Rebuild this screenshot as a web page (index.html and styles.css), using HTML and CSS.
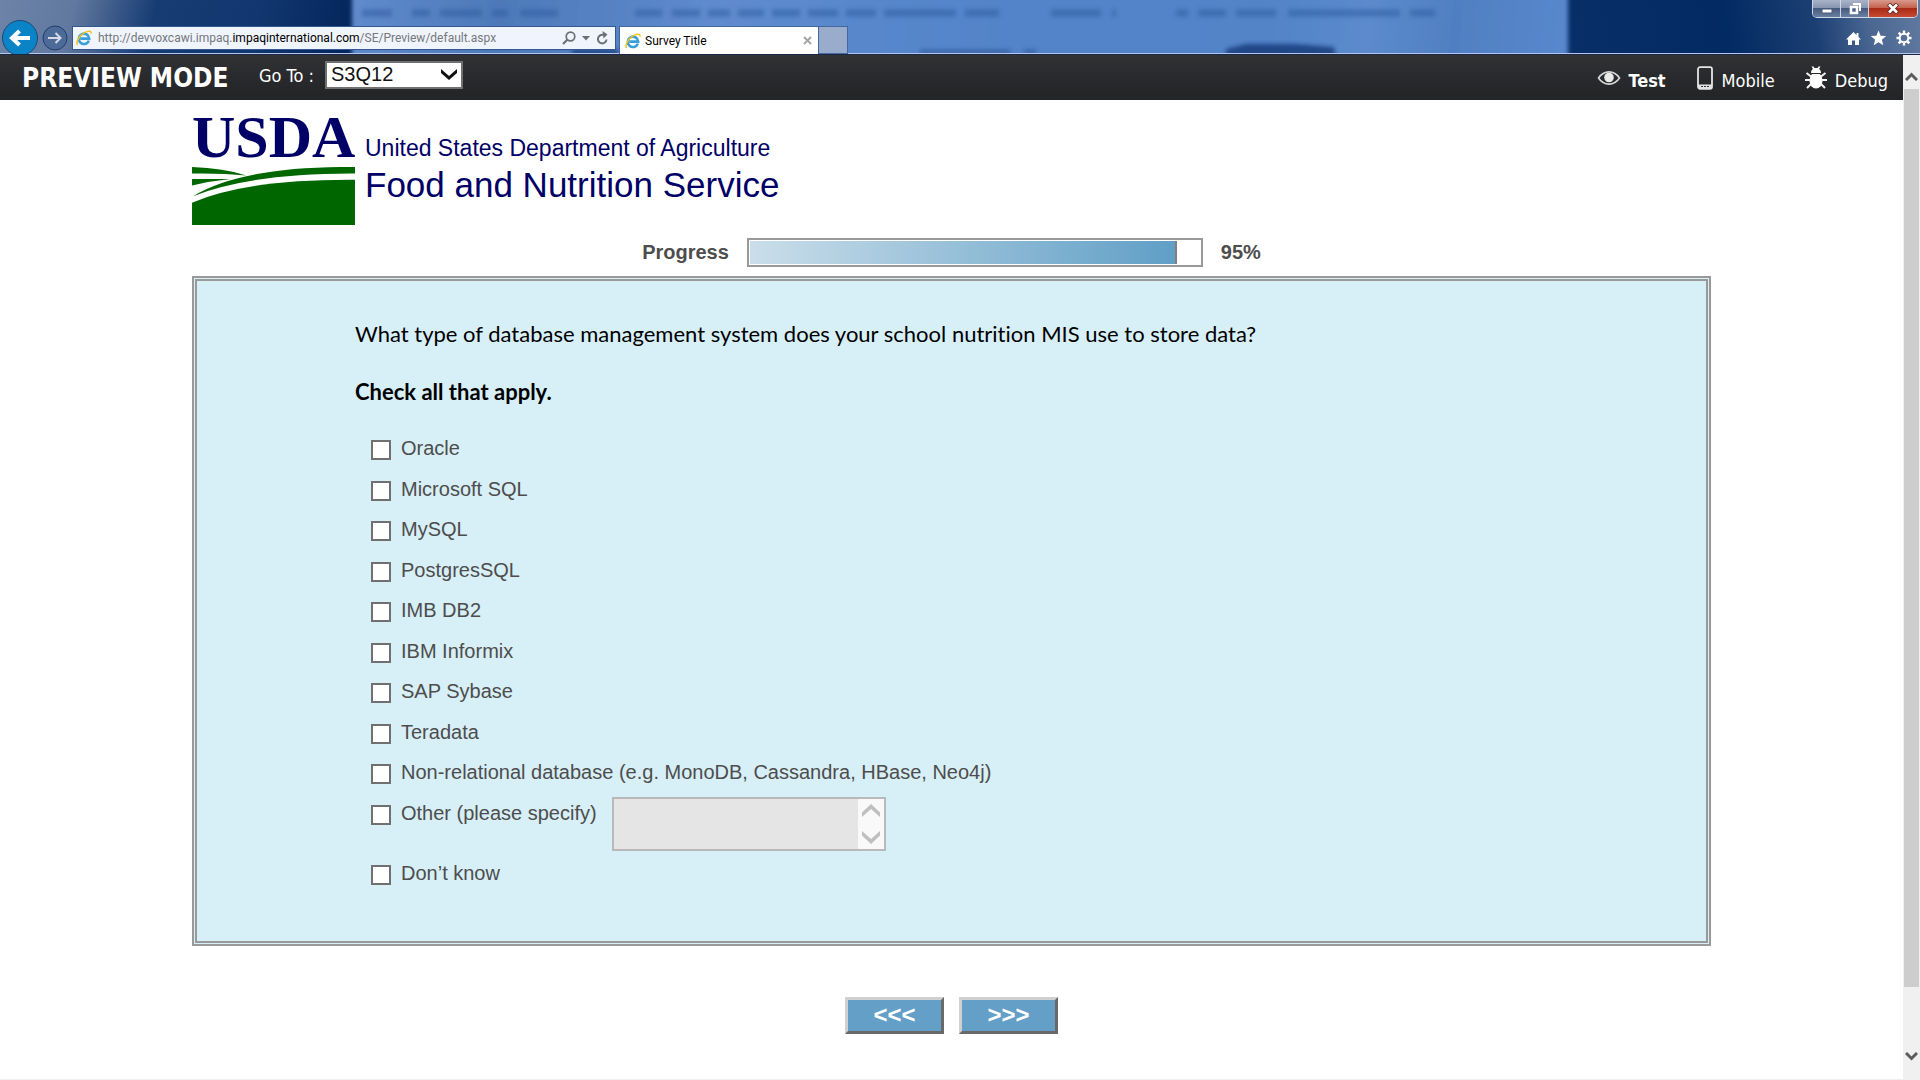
FILE: index.html
```html
<!DOCTYPE html>
<html lang="en">
<head>
<meta charset="utf-8">
<title>Survey Title</title>
<link rel="stylesheet" href="styles.css">
</head>
<body>
<svg class="symbols" aria-hidden="true">
  <symbol id="ie" viewBox="0 0 16 16">
    <path d="M12.9 10.6A5.2 5.2 0 1 1 13.2 8.6H4.4" fill="none" stroke="#3a9fd8" stroke-width="2.6"/>
    <path d="M1.6 15C-.6 12.400 3.500 5.200 8.500 2.600 12 .6 15.400.4 15 3.600" fill="none" stroke="#f2c21c" stroke-width="1.500"/>
  </symbol>
</svg>
<div class="browser">
  <header class="chrome">
    <svg class="glass" viewBox="0 0 1920 53" preserveAspectRatio="xMinYMin slice" aria-hidden="true">
      <defs>
        <linearGradient id="left" gradientUnits="userSpaceOnUse" x1="0" y1="0" x2="352" y2="90">
          <stop offset="0" stop-color="#6d83a8"/><stop offset=".2" stop-color="#62799f"/><stop offset=".42" stop-color="#173c74"/><stop offset=".7" stop-color="#12366f"/><stop offset="1" stop-color="#02235a"/>
        </linearGradient>
        <linearGradient id="mid" gradientUnits="userSpaceOnUse" x1="352" y1="0" x2="1568" y2="120">
          <stop offset="0" stop-color="#5f8bcd"/><stop offset=".12" stop-color="#4d79b9"/><stop offset=".3" stop-color="#5f8bcf"/><stop offset=".55" stop-color="#5283c8"/><stop offset=".75" stop-color="#5384c8"/><stop offset=".83" stop-color="#5c8acd"/><stop offset=".9" stop-color="#507fc2"/><stop offset="1" stop-color="#5a88ce"/>
        </linearGradient>
        <linearGradient id="right" gradientUnits="userSpaceOnUse" x1="1568" y1="60" x2="1920" y2="0">
          <stop offset="0" stop-color="#0a2f68"/><stop offset=".45" stop-color="#022a63"/><stop offset=".7" stop-color="#1c3f73"/><stop offset=".85" stop-color="#4a6792"/><stop offset="1" stop-color="#60799f"/>
        </linearGradient>
        <filter id="soft" filterUnits="userSpaceOnUse" x="300" y="-30" width="1320" height="120"><feGaussianBlur stdDeviation="2"/></filter>
      </defs>
      <rect width="353" height="53" fill="url(#left)"/>
      <rect x="1560" width="360" height="53" fill="url(#right)"/>
      <rect x="352" y="-10" width="1216" height="80" fill="url(#mid)" filter="url(#soft)"/>
      <g filter="url(#soft)" stroke="#2f5ba0" stroke-width="7" opacity=".55">
        <path d="M362 13h30M412 13h18M440 13h42M492 13h16M520 13h38M635 13h27M672 13h28M708 13h22M738 13h26M772 13h28M808 13h30M846 13h30M884 13h72M965 13h34M1051 13h50M1112 13h4M1176 13h12M1198 13h28M1236 13h40M1288 13h112M1410 13h25"/>
      </g>
      <g filter="url(#soft)" fill="#153d7c">
        <path d="M1226 60V49l20-5h50l38 3 2 13z" opacity=".85"/>
        <path d="M572 49h46v8h-46zM632 49h52v8h-52zM734 49h76v8h-76z" opacity=".8"/>
        <path d="M920 50h90v4h-90zM1024 50h12v4h-12z" opacity=".5"/>
      </g>
    </svg>
    <nav class="history">
      <button class="back" aria-label="Back"><svg viewBox="0 0 38 38"><circle cx="19" cy="19" r="17.500" fill="#0a84c6" stroke="#1c4876"/><path d="M29 19H12M18.500 12l-7.500 7 7.500 7" fill="none" stroke="#fff" stroke-width="4"/></svg></button>
      <button class="forward" aria-label="Forward"><svg viewBox="0 0 26 26"><circle cx="13" cy="13" r="12" fill="#4d6a98" stroke="#1f3d6d"/><path d="M6 13h12M13.500 8l5 5-5 5" fill="none" stroke="#d4dbe6" stroke-width="2"/></svg></button>
    </nav>
    <div class="address">
      <svg class="icon16"><use href="#ie"/></svg>
      <div class="url" role="textbox" aria-label="Address">http://devvoxcawi.impaq.<span class="domain">impaqinternational.com</span>/SE/Preview/default.aspx</div>
      <button aria-label="Search"><svg width="14" height="14" viewBox="0 0 14 14"><circle cx="8.500" cy="5.500" r="4.300" fill="none" stroke="#6b6f76" stroke-width="1.700"/><path d="M5.500 8.500L1 13" stroke="#6b6f76" stroke-width="2.200"/></svg></button>
      <button aria-label="Search options"><svg width="8" height="5" viewBox="0 0 8 5"><path d="M0 0h8L4 4.500z" fill="#6b6f76"/></svg></button>
      <button aria-label="Refresh"><svg width="13" height="14" viewBox="0 0 13 14"><path d="M10.500 8.500A4.300 4.300 0 1 1 7.500 4" fill="none" stroke="#6b6f76" stroke-width="2"/><path d="M6.500 0l5 3.500-4 4z" fill="#6b6f76"/></svg></button>
    </div>
    <div class="tabs">
      <div class="tab"><svg class="icon16"><use href="#ie"/></svg><span class="tab-title">Survey Title</span><button aria-label="Close tab"><svg width="9" height="9" viewBox="0 0 9 9"><path d="M1 1l7 7M8 1L1 8" stroke="#a6a6a6" stroke-width="2"/></svg></button></div>
      <button class="new-tab" aria-label="New tab"></button>
    </div>
    <div class="window">
      <div class="window-buttons">
        <button class="minimize" aria-label="Minimize"><svg width="12" height="6" viewBox="0 0 12 6"><path d="M1 1h10v4H1z" fill="#fff" stroke="#4b5b78"/></svg></button>
        <button class="restore" aria-label="Restore"><svg width="14" height="13" viewBox="0 0 14 13"><path d="M5 2h7v7" fill="none" stroke="#fff" stroke-width="2"/><path d="M3 5h6v6H3z" fill="none" stroke="#fff" stroke-width="2.600"/></svg></button>
        <button class="close" aria-label="Close"><svg width="12" height="11" viewBox="0 0 12 11"><path d="M1.500 1l9 9M10.500 1l-9 9" stroke="#5b2a28" stroke-width="4.400"/><path d="M2 1.500l8 8M10 1.500l-8 8" stroke="#fff" stroke-width="2.600"/></svg></button>
      </div>
      <div class="tools">
        <button aria-label="Home"><svg width="15" height="15" viewBox="0 0 15 15"><path d="M7.500 1L0 8.500h2V14h4V9.500h3V14h4V8.500h2L12.500 6V2h-2v2z" fill="#fff"/></svg></button>
        <button aria-label="Favorites"><svg width="17" height="16" viewBox="0 0 17 16"><path d="M8.500.5l2.100 5.200 5.600.4-4.300 3.600 1.400 5.500-4.800-3-4.800 3 1.400-5.500L.8 6.100l5.600-.4z" fill="#fff"/></svg></button>
        <button aria-label="Tools"><svg width="16" height="16" viewBox="0 0 16 16"><circle cx="8" cy="8" r="4.300" fill="none" stroke="#fff" stroke-width="2"/><path d="M8 .5v3M8 12.500v3M.5 8h3M12.500 8h3M2.700 2.700l2.100 2.100M11.200 11.200l2.100 2.100M2.700 13.300l2.100-2.100M11.200 4.800l2.100-2.100" stroke="#fff" stroke-width="2.400"/></svg></button>
      </div>
    </div>
  </header>

  <div class="viewport">
    <div class="page">
      <div class="preview-bar">
        <h1>PREVIEW MODE</h1>
        <label class="goto-label" for="goto">Go To :</label>
        <span class="goto"><select id="goto"><option>S3Q12</option></select><svg class="caret" width="18" height="12" viewBox="0 0 18 12"><path d="M1 1l8 7 8-7v4L9 12 1 5z" fill="#111"/></svg></span>
        <nav class="modes">
          <a class="current" href="#test"><svg width="24" height="16" viewBox="0 0 24 16"><path d="M1.500 8C7-.2 17-.2 22.500 8 17 16.200 7 16.200 1.500 8z" fill="none" stroke="#d8d8d8" stroke-width="1.600"/><circle cx="12" cy="7.500" r="4.800" fill="#e9e9e9"/></svg><span>Test</span></a>
          <a href="#mobile"><svg width="18" height="24" viewBox="0 0 18 24"><rect x="2" y="1.200" width="14" height="21.600" rx="2" fill="none" stroke="#e4e4e4" stroke-width="1.800"/><path d="M2 18.500h14v4H2z" fill="#e4e4e4"/><path d="M5 20.500h2M8 20.500h2M11 20.500h2" stroke="#333"/></svg><span>Mobile</span></a>
          <a href="#debug"><svg width="22" height="24" viewBox="0 0 22 24"><path d="M6 7h10c0-2-.8-3.500-2-4l1.500-2.500h-2L12.500 2h-3L8.500.5h-2L8 3C6.800 3.500 6 5 6 7z" fill="#fff"/><ellipse cx="11" cy="14.500" rx="6.500" ry="8" fill="#fff"/><path d="M6 10.500L1.500 7M16 10.500L20.500 7M6 14H0M16 14h6M6.500 17.500l-4.500 4.500M15.500 17.500l4.500 4.500" stroke="#f3f3f3" stroke-width="2"/><path d="M5 7.500h12" stroke="#2a2b2d"/></svg><span>Debug</span></a>
        </nav>
      </div>

      <main class="survey">
        <div class="logo">
          <div class="mark">
            <span class="usda">USDA</span>
            <svg class="field" viewBox="0 0 162 58" aria-hidden="true"><path d="M0 0Q32 1 54 8.500 30 6 0 6.500z" fill="#060"/><path d="M0 12h38Q18 14 0 18.500z" fill="#060"/><path d="M1 29Q50-1 162 0v6.500Q60 6 1 29z" fill="#060"/><path d="M0 35.500Q55 12 162 12.700V58H0z" fill="#060"/></svg>
          </div>
          <div class="agency">
            <span class="department">United States Department of Agriculture</span>
            <span class="service">Food and Nutrition Service</span>
          </div>
        </div>

        <div class="progress">
          <span id="progress-label">Progress</span>
          <div class="track" role="progressbar" aria-labelledby="progress-label" aria-valuenow="95"><div class="fill" style="width:95%"></div></div>
          <span>95%</span>
        </div>

        <form class="survey-form">
          <section class="question">
            <p class="prompt">What type of database management system does your school nutrition MIS use to store data?</p>
            <p class="hint">Check all that apply.</p>
            <ul class="answers">
              <li><input type="checkbox" id="a1"><label for="a1">Oracle</label></li>
              <li><input type="checkbox" id="a2"><label for="a2">Microsoft SQL</label></li>
              <li><input type="checkbox" id="a3"><label for="a3">MySQL</label></li>
              <li><input type="checkbox" id="a4"><label for="a4">PostgresSQL</label></li>
              <li><input type="checkbox" id="a5"><label for="a5">IMB DB2</label></li>
              <li><input type="checkbox" id="a6"><label for="a6">IBM Informix</label></li>
              <li><input type="checkbox" id="a7"><label for="a7">SAP Sybase</label></li>
              <li><input type="checkbox" id="a8"><label for="a8">Teradata</label></li>
              <li><input type="checkbox" id="a9"><label for="a9">Non-relational database (e.g. MonoDB, Cassandra, HBase, Neo4j)</label></li>
              <li class="other"><input type="checkbox" id="a10"><label for="a10">Other (please specify)</label>
                <div class="specify"><textarea aria-label="Other database" disabled></textarea><div class="spin"><svg width="18" height="13" viewBox="0 0 18 13"><path d="M9 0l9 8.500V13L9 5 0 13V8.500z" fill="#bfbfbf"/></svg><svg width="18" height="13" viewBox="0 0 18 13"><path d="M9 13l9-8.500V0L9 8 0 0v4.500z" fill="#bfbfbf"/></svg></div></div></li>
              <li><input type="checkbox" id="a11"><label for="a11">Don’t know</label></li>
            </ul>
          </section>
          <div class="actions">
            <button type="button" aria-label="Previous">&lt;&lt;&lt;</button>
            <button type="button" aria-label="Next">&gt;&gt;&gt;</button>
          </div>
        </form>
      </main>
    </div>
    <div class="scrollbar" aria-hidden="true">
      <svg width="13" height="9" viewBox="0 0 13 9"><path d="M1 8l5.500-5.500L12 8" fill="none" stroke="#5c5c5c" stroke-width="3"/></svg>
      <div class="rail"><div class="thumb"></div></div>
      <svg width="13" height="9" viewBox="0 0 13 9"><path d="M1 1l5.500 5.500L12 1" fill="none" stroke="#5c5c5c" stroke-width="3"/></svg>
    </div>
  </div>
</div>
</body>
</html>
```
FILE: styles.css
```css
* { box-sizing: border-box; }
body { margin: 0; font-family: "Liberation Sans", Arial, sans-serif; background: #fff; }
button { padding: 0; border: 0; background: none; font: inherit; display: flex; align-items: center; justify-content: center; }
svg { display: block; flex: none; }
.symbols { position: absolute; width: 0; height: 0; }
.browser { min-height: 100vh; display: flex; flex-direction: column; }
.icon16 { width: 16px; height: 16px; }

/* Browser chrome */
.chrome { position: relative; display: flex; align-items: flex-start; height: 55px; overflow: hidden; border-bottom: 1px solid #1b2745; box-shadow: inset 0 -1px #b4c8ee; font-family: Roboto, "Segoe UI", sans-serif; font-size: 12px; background: #0a2f68; }
.chrome > * { position: relative; }
.chrome > .glass { position: absolute; left: 0; top: 0; width: 100%; height: 53px; }
.history { display: flex; gap: 3px; width: 72px; padding: 19px 0 0 1px; align-items: flex-start; }
.history .back svg { width: 38px; height: 38px; }
.history .forward { padding-top: 6px; }
.history .forward svg { width: 26px; height: 26px; }
.address { display: flex; align-items: center; gap: 6px; width: 544px; height: 24px; margin-top: 26px; padding: 0 6px 0 3px; border: 1px solid #34598f; background: #f0f4fc; }
.url { flex: 1; color: #75787d; white-space: nowrap; }
.domain { color: #000; }
.tabs { display: flex; margin: 26px 0 0 3px; height: 28px; }
.tab { display: flex; align-items: center; gap: 4px; width: 200px; padding: 0 6px 0 5px; border: 1px solid #44669c; border-bottom: 0; background: #fff; }
.tab-title { flex: 1; }
.new-tab { width: 29px; background: #9eaecb; border: 1px solid #44669c; border-left: 0; opacity: .95; }
.window { display: flex; flex-direction: column; gap: 12px; margin-left: auto; padding-right: 2px; }
.window-buttons { display: flex; height: 18px; border: 1px solid #cfd8e6; border-top: 0; border-radius: 0 0 5px 5px; overflow: hidden; }
.window-buttons button { width: 28px; background: linear-gradient(#a9b4c8, #8896b1 45%, #455a80 50%, #6c80a0); border-right: 1px solid #cfd8e6; }
.window-buttons .minimize { padding-top: 4px; }
.window-buttons .close { width: 48px; border: 0; background: linear-gradient(#d99a8d, #c4634f 45%, #a92b17 50%, #c84a32); }
.tools { display: flex; gap: 9px; justify-content: flex-end; padding-right: 6px; }

/* Document area */
.viewport { flex: 1; display: flex; border-bottom: 1px solid #efefef; }
.page { flex: 1; min-width: 0; }
.scrollbar { display: flex; flex-direction: column; align-items: center; width: 17px; padding: 17px 0 18px; gap: 8px; background: #f0f0f0; }
.rail { flex: 1; width: 15px; }
.thumb { height: 94%; background: #cdcdcd; }

.preview-bar { display: flex; align-items: center; height: 45px; padding: 0 15px 0 22px; color: #fff; background: linear-gradient(#323335, #2a2b2e 40%, #232426); font-family: "DejaVu Sans Condensed", Tahoma, sans-serif; font-size: 18px; }
.preview-bar h1 { margin: 0; width: 237px; font-size: 26px; white-space: nowrap; }
.goto-label { width: 66px; padding-bottom: 4px; white-space: nowrap; }
.goto { position: relative; display: flex; padding-bottom: 6px; }
.goto select { appearance: none; width: 138px; height: 28px; padding: 0 4px 2px; border: 2px solid #707070; border-radius: 0; background: #fff; color: #111; font: 20px "Liberation Sans", Arial, sans-serif; }
.caret { position: absolute; right: 5px; top: 7px; pointer-events: none; }
.modes { display: flex; gap: 30px; margin-left: auto; }
.modes a { display: flex; align-items: center; gap: 8px; color: #fff; text-decoration: none; }
.modes span { padding-top: 5px; }
.modes .current { font-weight: bold; }

.survey { padding: 12px 192px 0; color: #4d4d4d; font-size: 20px; }
.logo { display: flex; gap: 10px; color: #006; }
.mark { width: 163px; }
.usda { display: block; height: 55px; font: bold 60px/50px "Liberation Serif", "Times New Roman", serif; }
.field { width: 100%; }
.agency { display: flex; flex-direction: column; padding-top: 22px; white-space: nowrap; }
.department { font-size: 23px; line-height: 28px; }
.service { font-size: 35px; line-height: 46px; }

.progress { display: flex; justify-content: center; align-items: center; gap: 18px; margin: 13px 0 9px; font-weight: bold; }
.track { width: 456px; height: 29px; padding: 1px; border: 2px solid #999; background: #fff; }
.fill { height: 100%; border-right: 2px solid #808080; background: linear-gradient(90deg, #cadeea, #609fc6); }

.question { padding: 39px 20px 47px 158px; border: 5px double #999; background: #d7eff7; }
.prompt, .hint { margin: 0; color: #000; font: 22px/28px Lato, Calibri, sans-serif; font-variant-ligatures: none; }
.hint { margin: 30px 0 22px; font-weight: bold; }
.answers { margin: 0; padding: 0 0 0 16px; list-style: none; }
.answers li { display: flex; align-items: flex-start; gap: 10px; height: 41px; line-height: 40px; }
.answers li:nth-child(even) { height: 40px; }
.answers li.other { height: 60px; }
.answers input { appearance: none; flex: none; width: 20px; height: 20px; margin: 12px 0 0; border: 2px solid #707070; background: #fff; }
.specify { display: flex; width: 274px; height: 54px; margin: 4px 0 0 5px; border: 2px solid #b9b9b9; background: #e5e5e5; }
.specify textarea { flex: 1; min-width: 0; resize: none; border: 0; background: none; font: inherit; overflow: hidden; }
.spin { display: flex; flex-direction: column; align-items: center; justify-content: space-between; width: 26px; padding: 5px 0; background: #f9f9f9; }

.actions { display: flex; justify-content: center; gap: 15px; padding: 51px 0 40px; }
.actions button { width: 99px; height: 37px; padding-bottom: 2px; border: 3px solid; border-color: #d0d0d0 #696969 #696969 #d0d0d0; background: #639fc6; color: #fff; font-size: 24px; font-weight: bold; }
```
